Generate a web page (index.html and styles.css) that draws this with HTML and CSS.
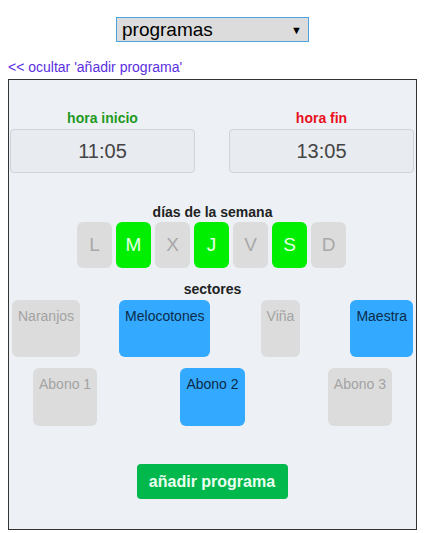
FILE: index.html
```html
<!DOCTYPE html>
<html lang="es">

<head>
    <meta charset="UTF-8">
    <meta name="viewport" content="width=device-width, initial-scale=1.0">
    <title>Programas</title>
    <link rel="stylesheet" href="styles.css">
</head>

<body>
    <div class="selector-row">
        <div class="fake-select">
            <span>programas</span>
            <span class="select-arrow">▼</span>
        </div>
    </div>

    <a class="toggle-link" href="#">&lt;&lt; ocultar 'añadir programa'</a>

    <div class="program-box">
        <!-- horas -->
        <div class="time-row">
            <div class="time-col">
                <div class="time-label start">hora inicio</div>
                <div class="time-input">11:05</div>
            </div>
            <div class="time-col">
                <div class="time-label end">hora fin</div>
                <div class="time-input">13:05</div>
            </div>
        </div>

        <!-- dias -->
        <div class="section-title days-title">días de la semana</div>
        <div class="days-row">
            <div class="day">L</div>
            <div class="day on">M</div>
            <div class="day">X</div>
            <div class="day on">J</div>
            <div class="day">V</div>
            <div class="day on">S</div>
            <div class="day">D</div>
        </div>

        <!-- sectores -->
        <div class="section-title sectors-title">sectores</div>
        <div class="sector-row first">
            <div class="sector narrow-gap">Naranjos</div>
            <div class="sector on">Melocotones</div>
            <div class="sector">Viña</div>
            <div class="sector on">Maestra</div>
        </div>
        <div class="sector-row second">
            <div class="sector">Abono 1</div>
            <div class="sector on">Abono 2</div>
            <div class="sector">Abono 3</div>
        </div>

        <div class="add-row">
            <button class="add-button">añadir programa</button>
        </div>
    </div>
</body>

</html>
```

FILE: styles.css
```css
body {
    font-family: "Liberation Sans", Arial, sans-serif;
    margin: 8px;
    background-color: #fff;
    color: #222;
}

.selector-row {
    text-align: center;
    padding-top: 9px;
    padding-right: 3px;
}

.fake-select {
    display: inline-flex;
    align-items: center;
    justify-content: space-between;
    box-sizing: border-box;
    width: 193px;
    height: 25px;
    padding: 0 6px 0 5px;
    background-color: #dcdcdc;
    border: 1px solid #4da3dd;
    font-size: 19px;
    color: #000;
    text-align: left;
}

.select-arrow {
    font-size: 11px;
}

.toggle-link {
    display: block;
    margin-top: 17px;
    line-height: 16px;
    font-size: 14px;
    color: #5a2fe0;
    text-decoration: none;
}

.program-box {
    width: 407px;
    margin-top: 4px;
    border: 1px solid #333;
    background-color: #edf1f6;
    padding: 30px 0 30px 0;
}

.time-row {
    display: flex;
    justify-content: space-between;
    padding: 0 2px 0 1px;
}

.time-col {
    width: 185px;
}

.time-label {
    text-align: center;
    font-size: 14px;
    font-weight: bold;
    line-height: 16px;
    margin-bottom: 3px;
}

.time-label.start {
    color: #1f9a1f;
}

.time-label.end {
    color: #e8101c;
}

.time-input {
    box-sizing: border-box;
    height: 44px;
    line-height: 42px;
    text-align: center;
    font-size: 20px;
    color: #444;
    background-color: #e8ebf0;
    border: 1px solid #cfd3da;
    border-radius: 4px;
}

.section-title {
    text-align: center;
    font-size: 14px;
    font-weight: bold;
    line-height: 16px;
    color: #222;
}

.days-title {
    margin-top: 31px;
}

.days-row {
    display: flex;
    justify-content: center;
    gap: 4px;
    margin-top: 2px;
    padding-right: 2px;
}

.day {
    width: 35px;
    height: 46px;
    line-height: 46px;
    text-align: center;
    font-size: 19px;
    color: #a8a8a8;
    background-color: #dcdcdc;
    border-radius: 6px;
}

.day.on {
    background-color: #00ee00;
    color: #e6ffe6;
}

.sectors-title {
    margin-top: 13px;
}

.sector-row {
    display: flex;
    align-items: flex-start;
    justify-content: space-between;
}

.sector-row.first {
    margin-top: 3px;
    padding: 0 3px;
}

.sector-row.second {
    margin-top: 11px;
    padding: 0 24px;
}

.sector {
    box-sizing: border-box;
    height: 57px;
    padding: 8px 6px 0 6px;
    font-size: 14px;
    line-height: 17px;
    white-space: nowrap;
    color: #a3a3a3;
    background-color: #dcdcdc;
    border-radius: 6px;
    text-align: center;
}

.sector-row.second .sector {
    height: 58px;
}

.sector.narrow-gap {
    margin-right: -11px;
}

.sector.on {
    background-color: #33aaff;
    color: #0b2a4a;
}

.add-row {
    text-align: center;
    margin-top: 38px;
    padding-right: 1px;
}

.add-button {
    width: 151px;
    height: 35px;
    background-color: #00b84c;
    color: #eafff0;
    border: none;
    border-radius: 4px;
    font-family: "Liberation Sans", Arial, sans-serif;
    font-size: 16px;
    font-weight: bold;
    cursor: pointer;
}
```
